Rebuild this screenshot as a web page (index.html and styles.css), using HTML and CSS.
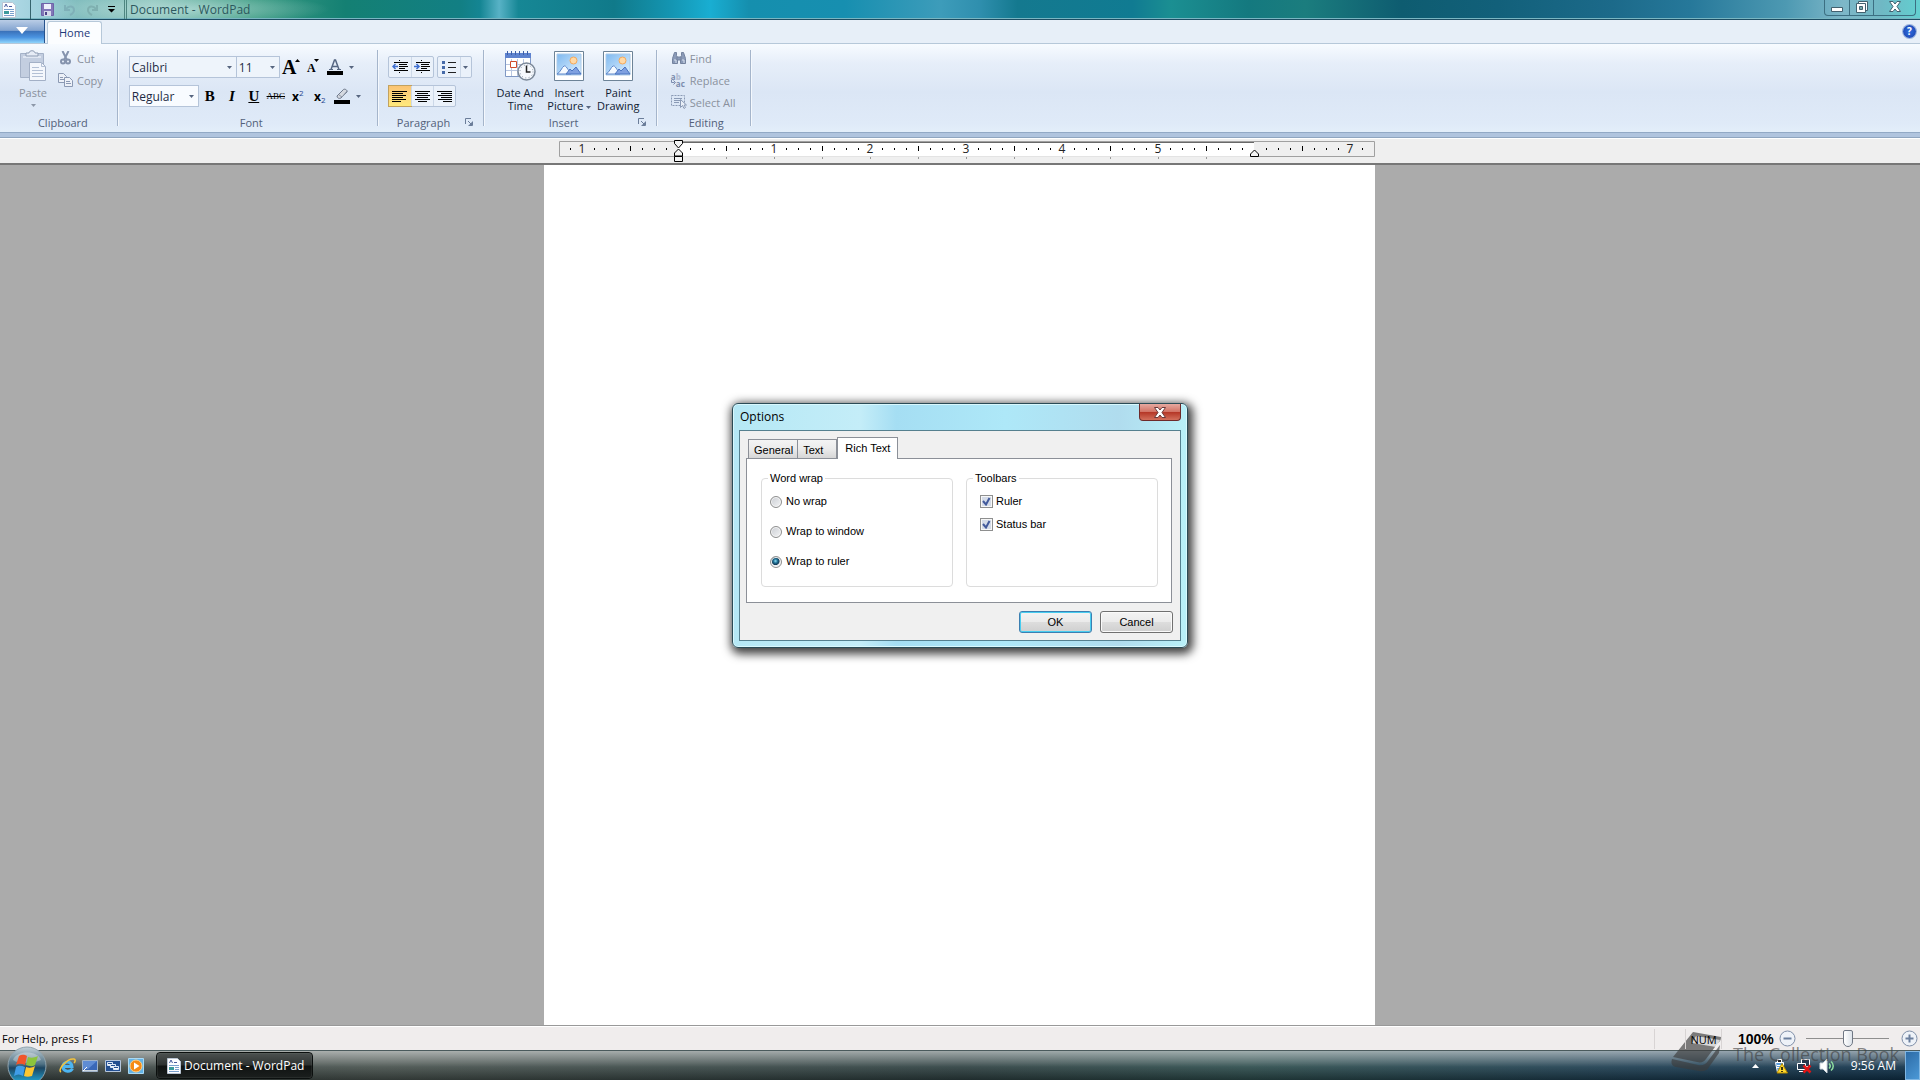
FILE: index.html
```html
<!DOCTYPE html>
<html lang="en">
<head>
    <meta charset="utf-8">
    <title>Document - WordPad</title>
    <link rel="stylesheet" href="styles.css">
</head>
<body>
    <!-- shared shapes -->
    <svg class="defs" width="0" height="0">
        <defs>
            <linearGradient id="sky" x1="0" y1="0" x2="1" y2="1">
                <stop offset="0" stop-color="#7fb9f0"/>
                <stop offset="1" stop-color="#e2f3ff"/>
            </linearGradient>
            <linearGradient id="orbFill" x1="0" y1="0" x2="0" y2="1">
                <stop offset="0" stop-color="#c3d2da"/>
                <stop offset=".45" stop-color="#4f7184"/>
                <stop offset=".55" stop-color="#1d4561"/>
                <stop offset="1" stop-color="#23b5e8"/>
            </linearGradient>
            <symbol id="doc" viewBox="0 0 14 16">
                <path d="M.5 .5h10l3 3v12H.5z" fill="#fdfdff" stroke="#b9c4d2"/>
                <path d="M2.500 5l1.500-3 1.500 3M7 4.500h3" stroke="#46599c" fill="none"/>
                <path d="M2 7.500h10M8 9.500h4M8 11.500h4M2 13.500h10" stroke="#7aa0cc"/>
                <path d="M2 9h5v3H2z" fill="#3c9a9b"/>
            </symbol>
            <symbol id="picture" viewBox="0 0 30 30">
                <path d="M.5 .5h29v29H.5z" fill="#fff" stroke="#6d8397"/>
                <path d="M3 3h24v21H3z" fill="url(#sky)" stroke="#a9c9e8"/>
                <circle cx="19.500" cy="9.500" r="3.500" fill="#ffd9a6" stroke="#f3a95c"/>
                <path d="M3 23c3-1 5-7 7-8s4 4 7 8z" fill="#f5faff" stroke="#5e87c9"/>
                <path d="M12 23l4-5 2 2 4-4 5 7z" fill="#7fa0e0" stroke="#4a74c0"/>
                <path d="M4 25.500h22" stroke="#fff"/>
            </symbol>
            <symbol id="arrow" viewBox="0 0 5 3">
                <path d="M0 0h5L2.500 3z"/>
            </symbol>
            <symbol id="launch" viewBox="0 0 8 8">
                <path d="M.5 6V.5H6M3 3l3 3M7.500 3.500v4h-4" fill="none" stroke="#6b7d99"/>
                <path d="M7 4v3H4z" fill="#6b7d99"/>
            </symbol>
        </defs>
    </svg>

    <header class="titlebar">
        <svg class="doc-icon" width="14" height="16"><use href="#doc"/></svg>
        <div class="quick-access">
            <button type="button" aria-label="Save">
                <svg width="13" height="13" viewBox="0 0 13 13">
                    <path d="M.5 .5h12v12H.5z" fill="#8277b8" stroke="#6f63a8"/>
                    <path d="M3 1h7v5H3z" fill="#eef0fb"/>
                    <path d="M3 8h7v5H3z" fill="#d5d9ea"/>
                    <path d="M4 9h2v3H4z" fill="#4e4389"/>
                </svg>
            </button>
            <button type="button" aria-label="Undo">
                <svg width="12" height="12" viewBox="0 0 12 12" fill="none" stroke="#7fb0b8" stroke-width="2">
                    <path d="M1 1v5h5M2 5c3-4 8-3 8 1 0 3-2 4-4 5"/>
                </svg>
            </button>
            <button type="button" aria-label="Redo">
                <svg width="12" height="12" viewBox="0 0 12 12" fill="none" stroke="#7fb0b0" stroke-width="2">
                    <path d="M11 1v5H6M10 5C7 1 2 2 2 6c0 3 2 4 4 5"/>
                </svg>
            </button>
            <button type="button" aria-label="Customize Quick Access Toolbar">
                <svg width="7" height="7" viewBox="0 0 7 7"><path d="M0 0h7v1H0zM0 3h7L3.500 6.500z"/></svg>
            </button>
        </div>
        <span class="window-title">Document - WordPad</span>
        <div class="window-buttons">
            <button type="button" aria-label="Minimize">
                <svg width="12" height="12" viewBox="0 0 12 12"><path d="M.5 6.500h11v4H.5z" fill="#fff" stroke="#43616f"/></svg>
            </button>
            <button type="button" aria-label="Restore">
                <svg width="12" height="12" viewBox="0 0 12 12">
                    <path d="M2.500 .5h9v9h-9z" fill="#fff" stroke="#43616f"/>
                    <path d="M.5 2.500h9v9h-9z" fill="#fff" stroke="#43616f"/>
                    <path d="M3.500 5.500h3v3h-3z" fill="#7aa" stroke="#43616f"/>
                </svg>
            </button>
            <button type="button" class="wide" aria-label="Close">
                <svg width="12" height="11" viewBox="0 0 12 11">
                    <path d="M.5 .5h3.500l2 2.500 2-2.500h3.500L8 5.500l3.500 5H8L6 8l-2 2.500H.500l3.500-5z" fill="#fff" stroke="#43616f"/>
                </svg>
            </button>
        </div>
    </header>

    <nav class="tabrow">
        <button type="button" class="app-button" aria-label="WordPad menu">
            <svg width="12" height="7" viewBox="0 0 12 7"><path d="M0 0h12L6 7z" fill="#fff"/></svg>
        </button>
        <button type="button" class="ribbon-tab">Home</button>
        <button type="button" class="help" aria-label="Help">?</button>
    </nav>

    <section class="ribbon">
        <div class="group clipboard">
            <div class="group-body">
                <button type="button" class="big dim">
                    <svg width="28" height="32" viewBox="0 0 28 32">
                        <path d="M1.500 3.500h23v24h-23z" fill="#c3cee0" stroke="#a5b2c8"/>
                        <path d="M4 6h18v2H4z" fill="#dfe6f2"/>
                        <path d="M7 6V3h3c0-3 6-3 6 0h3v3z" fill="#e6ecf6" stroke="#8f9db4"/>
                        <path d="M10.500 12.500h12l4 4v14h-16z" fill="#f4f7fc" stroke="#a3b0c6"/>
                        <path d="M22.500 12.500v4h4M13 17.500h7M13 20.500h11M13 23.500h11M13 26.500h11" fill="none" stroke="#b3c0d5"/>
                    </svg>
                    <span>Paste</span>
                    <svg class="arrow" width="5" height="3"><use href="#arrow"/></svg>
                </button>
                <div class="stack">
                    <button type="button" class="small dim">
                        <svg width="16" height="14" viewBox="0 0 16 14" fill="none" stroke="#8593ad">
                            <path d="M4.500 0l4.500 9M10.500 0l-4.500 9" stroke-width="2"/>
                            <circle cx="5" cy="10.500" r="2" stroke-width="2"/>
                            <circle cx="10" cy="10.500" r="2" stroke-width="2"/>
                        </svg>
                        Cut
                    </button>
                    <button type="button" class="small dim">
                        <svg width="16" height="14" viewBox="0 0 16 14" fill="#edf1f8" stroke="#8b99b3">
                            <path d="M.5 .5h5l3 3v6h-8zM2 4.500h3M2 6.500h4"/>
                            <path d="M6.500 4.500h5l3 3v6h-8zM8 8.500h4M8 10.500h5"/>
                        </svg>
                        Copy
                    </button>
                </div>
            </div>
            <div class="group-foot"><span>Clipboard</span></div>
        </div>

        <div class="group font">
            <div class="group-body rows">
                <div class="row">
                    <select class="combo family" aria-label="Font family"><option>Calibri</option></select>
                    <select class="combo size" aria-label="Font size"><option>11</option></select>
                    <button type="button" class="tool serif grow" aria-label="Grow font">A<svg width="5" height="3" viewBox="0 0 5 3"><path d="M0 3h5L2.500 0z"/></svg></button>
                    <button type="button" class="tool serif shrink" aria-label="Shrink font">A<svg width="5" height="3"><use href="#arrow"/></svg></button>
                    <button type="button" class="tool" aria-label="Text color">
                        <svg width="16" height="16" viewBox="0 0 16 16">
                            <path d="M4 10.500L7.500 1h1L12 10.500M5.500 7.500h5" fill="none" stroke="#566682" stroke-width="1.500"/>
                            <path d="M2 10.500h4M10 10.500h4" stroke="#566682"/>
                            <path d="M0 12h16v4H0z"/>
                        </svg>
                    </button>
                    <button type="button" class="drop" aria-label="More text colors"><svg width="5" height="3"><use href="#arrow"/></svg></button>
                </div>
                <div class="row">
                    <select class="combo style" aria-label="Font style"><option>Regular</option></select>
                    <button type="button" class="tool serif">B</button>
                    <button type="button" class="tool serif"><i>I</i></button>
                    <button type="button" class="tool serif"><u>U</u></button>
                    <button type="button" class="tool strike"><s>ABC</s></button>
                    <button type="button" class="tool script">x<sup>2</sup></button>
                    <button type="button" class="tool script">x<sub>2</sub></button>
                    <button type="button" class="tool" aria-label="Highlight color">
                        <svg width="16" height="16" viewBox="0 0 16 16">
                            <path d="M3 8l6-6c1-2 5 0 4 2L7 10c-2 1-4 0-4-2z" fill="#d5d9e0" stroke="#707a8c"/>
                            <path d="M5 7l3 2 5-6" fill="none" stroke="#8e98a8"/>
                            <path d="M0 12h16v4H0z"/>
                        </svg>
                    </button>
                    <button type="button" class="drop" aria-label="More highlight colors"><svg width="5" height="3"><use href="#arrow"/></svg></button>
                </div>
            </div>
            <div class="group-foot"><span>Font</span></div>
        </div>

        <div class="group paragraph">
            <div class="group-body rows">
                <div class="row spaced">
                    <div class="cluster">
                        <button type="button" class="tool" aria-label="Decrease indent">
                            <svg width="16" height="14" viewBox="0 0 16 14" fill="none" stroke="#000">
                                <path d="M7 .5h1M2 2.500h14M7 4.500h8M7 6.500h9M7 8.500h6M2 10.500h14M7 12.500h1"/>
                                <path d="M6 6.500H1M3.500 4L1 6.500 3.500 9" stroke="#3f6fd0" stroke-width="1.500"/>
                            </svg>
                        </button>
                        <button type="button" class="tool" aria-label="Increase indent">
                            <svg width="16" height="14" viewBox="0 0 16 14" fill="none" stroke="#000">
                                <path d="M7 .5h1M2 2.500h14M7 4.500h8M7 6.500h9M7 8.500h6M2 10.500h14M7 12.500h1"/>
                                <path d="M0 6.500h5M2.500 4L5 6.500 2.500 9" stroke="#3f6fd0" stroke-width="1.500"/>
                            </svg>
                        </button>
                    </div>
                    <div class="cluster">
                        <button type="button" class="tool" aria-label="Bullets">
                            <svg width="14" height="13" viewBox="0 0 14 13">
                                <path d="M6 1.500h8M6 6.500h8M6 11.500h8" stroke="#222"/>
                                <path d="M0 0h3v3H0zM0 5h3v3H0zM0 10h3v3H0z" fill="#466aa8"/>
                            </svg>
                        </button>
                        <button type="button" class="drop" aria-label="More bullets"><svg width="5" height="3"><use href="#arrow"/></svg></button>
                    </div>
                </div>
                <div class="row">
                    <div class="cluster">
                        <button type="button" class="tool active" aria-label="Align left">
                            <svg width="15" height="11" viewBox="0 0 15 11"><path d="M0 .5h15M0 2.500h11M0 4.500h14M0 6.500h11M0 8.500h14M0 10.500h9" stroke="#000"/></svg>
                        </button>
                        <button type="button" class="tool" aria-label="Center">
                            <svg width="15" height="11" viewBox="0 0 15 11"><path d="M0 .5h15M2 2.500h11M0 4.500h15M2 6.500h11M0 8.500h15M3 10.500h9" stroke="#000"/></svg>
                        </button>
                        <button type="button" class="tool" aria-label="Align right">
                            <svg width="15" height="11" viewBox="0 0 15 11"><path d="M0 .5h15M4 2.500h11M1 4.500h14M4 6.500h11M1 8.500h14M6 10.500h9" stroke="#000"/></svg>
                        </button>
                    </div>
                </div>
            </div>
            <div class="group-foot"><span>Paragraph</span><button type="button" class="launcher" aria-label="Paragraph settings"><svg width="8" height="8"><use href="#launch"/></svg></button></div>
        </div>

        <div class="group insert">
            <div class="group-body">
                <button type="button" class="big">
                    <svg width="32" height="30" viewBox="0 0 32 30">
                        <path d="M1.500 3.500h25v22h-25z" fill="#fff" stroke="#8098c4"/>
                        <path d="M1 2h26v5H1z" fill="#5d82cf"/>
                        <path d="M3.500 0v4M7.500 0v4M11.500 0v4M15.500 0v4M19.500 0v4M23.500 0v4" stroke="#3d5fa8"/>
                        <path d="M2 13.500h24M2 19.500h24M7.500 8v17M13.500 8v17M19.500 8v17" stroke="#b8c6e0"/>
                        <path d="M6.500 10.500h6v6h-6z" fill="#fff" stroke="#cf4b2c"/>
                        <circle cx="22.500" cy="20.500" r="8.500" fill="#f6f9fd" stroke="#7b8898" stroke-width="1.500"/>
                        <path d="M22.500 14.500v6.500h4" fill="none" stroke="#222" stroke-width="1.500"/>
                        <circle cx="22.500" cy="20.500" r="6.500" fill="none" stroke="#8794a6" stroke-dasharray="1 2.400"/>
                    </svg>
                    <span>Date And<br>Time</span>
                </button>
                <button type="button" class="big">
                    <svg width="30" height="30"><use href="#picture"/></svg>
                    <span>Insert<br>Picture <svg class="arrow" width="5" height="3"><use href="#arrow"/></svg></span>
                </button>
                <button type="button" class="big">
                    <svg width="30" height="30"><use href="#picture"/></svg>
                    <span>Paint<br>Drawing</span>
                </button>
            </div>
            <div class="group-foot"><span>Insert</span><button type="button" class="launcher" aria-label="Insert object"><svg width="8" height="8"><use href="#launch"/></svg></button></div>
        </div>

        <div class="group editing">
            <div class="group-body">
                <div class="stack">
                    <button type="button" class="small dim">
                        <svg width="16" height="14" viewBox="0 0 16 14" fill="#8a9ab8" stroke="#74839f">
                            <path d="M3.500 1.500h2v3l1 2v6h-5v-5zM10.500 1.500h2l2 6v5h-5v-6l1-2z"/>
                            <path d="M6 6h4v3H6z"/>
                            <path d="M3 9h2v3M11 9h2v3" fill="none" stroke="#d7e0ee"/>
                        </svg>
                        Find
                    </button>
                    <button type="button" class="small dim">
                        <span class="abac" aria-hidden="true">
                            <span>a<b>b</b></span>
                            <span><svg width="5" height="5" viewBox="0 0 5 5" fill="none" stroke="#7b8cae"><path d="M.5 0v2.500h3M2.500 .5l2 2-2 2"/></svg>ac</span>
                        </span>
                        Replace
                    </button>
                    <button type="button" class="small dim">
                        <svg width="16" height="14" viewBox="0 0 16 14" fill="none" stroke="#8a9ab5">
                            <path d="M.5 .5h13v10H.5z" stroke-dasharray="2 1"/>
                            <path d="M3 3.500h8M3 5.500h6M3 7.500h5"/>
                            <path d="M9.500 4.500v8l2-2 1.500 3 1.500-1-1.500-2.500h2.500z" fill="#e9eff8"/>
                        </svg>
                        Select All
                    </button>
                </div>
            </div>
            <div class="group-foot"><span>Editing</span></div>
        </div>
    </section>

    <div class="ruler-strip">
        <svg class="ruler" width="831" height="24" viewBox="0 0 831 24">
            <defs>
                <pattern id="ticks" x="134" y="0" width="96" height="24" patternUnits="userSpaceOnUse">
                    <path d="M12 9h1v2h-1zM24 9h1v2h-1zM36 9h1v2h-1zM48 7h1v5h-1zM60 9h1v2h-1zM72 9h1v2h-1zM84 9h1v2h-1z"/>
                </pattern>
                <pattern id="stops" x="134" y="0" width="48" height="24" patternUnits="userSpaceOnUse">
                    <path d="M0 18h1v2H0z" fill="#999"/>
                </pattern>
            </defs>
            <path d="M15.500 2.500h815v15h-815z" fill="#efefef" stroke="#a0a0a0"/>
            <path d="M134 2h576v16H134z" fill="#fff"/>
            <path d="M134 2h576v1H134z" fill="#a0a0a0"/>
            <path d="M134 3h576v1H134z" fill="#696969"/>
            <path d="M134 17h576v1H134z" fill="#e3e3e3"/>
            <path d="M16 4h814v12H16z" fill="url(#ticks)"/>
            <path d="M180 18h524v2H180z" fill="url(#stops)"/>
            <text x="38" y="14">1</text>
            <text x="230" y="14">1</text>
            <text x="326" y="14">2</text>
            <text x="422" y="14">3</text>
            <text x="518" y="14">4</text>
            <text x="614" y="14">5</text>
            <text x="806" y="14">7</text>
            <path d="M130.500 1.500h8v3l-4 4.500-4-4.500zM134.500 10l4 4v3h-8v-3zM130.500 17.500h8v5h-8z" fill="#f4f4f4" stroke="#000"/>
            <path d="M710.500 11l4 4v2.500h-8v-2.500z" fill="#f4f4f4" stroke="#000"/>
        </svg>
    </div>

    <main class="workspace">
        <div class="page" contenteditable="true" role="textbox" aria-label="Document"></div>
    </main>

    <footer class="statusbar">
        <span class="hint">For Help, press F1</span>
        <span class="cell"></span>
        <span class="cell num">NUM</span>
        <span class="percent">100%</span>
        <button type="button" class="zoom-button" aria-label="Zoom out">
            <svg width="17" height="17" viewBox="0 0 17 17"><circle cx="8.500" cy="8.500" r="7.500" fill="#eef2f8" stroke="#7f8fa8"/><path d="M4.500 8.500h8" stroke="#6b7f9e" stroke-width="2"/></svg>
        </button>
        <input type="range" class="zoom" min="0" max="100" value="51" aria-label="Zoom">
        <button type="button" class="zoom-button" aria-label="Zoom in">
            <svg width="17" height="17" viewBox="0 0 17 17"><circle cx="8.500" cy="8.500" r="7.500" fill="#eef2f8" stroke="#7f8fa8"/><path d="M4.500 8.500h8M8.500 4.500v8" stroke="#6b7f9e" stroke-width="2"/></svg>
        </button>
    </footer>

    <div class="taskbar">
        <button type="button" class="start" aria-label="Start">
            <svg width="40" height="40" viewBox="0 0 40 40">
                <circle cx="20" cy="20" r="19" fill="url(#orbFill)" stroke="#8fa3ae"/>
                <path d="M6 14C9 4 31 4 34 14c-7 3-21 5-28 0z" fill="#fff" opacity=".3"/>
                <path d="M12 10c3-2 6-1 8 0l-2 9c-3-1-6-2-9 0z" fill="#f0562b"/>
                <path d="M21 11c3 1 6 1 10-1l-3 9c-3 2-6 1-9 0z" fill="#8cc43c"/>
                <path d="M9 21c3-2 6-1 9 0l-2 9c-3-2-6-2-9 0z" fill="#3f9de8"/>
                <path d="M19 21c3 1 6 1 9-1l-3 10c-3 1-6 1-8 0z" fill="#fdc62f"/>
            </svg>
        </button>
        <div class="quick-launch">
            <button type="button" aria-label="Internet Explorer">
                <svg width="17" height="16" viewBox="0 0 17 16" fill="none">
                    <path d="M13.500 10.500C12 14 5 14.500 4 9.500 3 3 12.500 2 13 8.500H5" stroke="#4cb5f2" stroke-width="3"/>
                    <path d="M2 14C-2 12 8 0 15 1c2 .5 1 3 0 4" stroke="#f3c33c" stroke-width="1.500"/>
                </svg>
            </button>
            <button type="button" aria-label="Show Desktop">
                <svg width="17" height="16" viewBox="0 0 17 16">
                    <path d="M.5 2.500h15v11H.5z" fill="#3a68b8" stroke="#9fb2c8"/>
                    <path d="M1 3h14L6 11H1z" fill="#5f8cd4"/>
                    <path d="M1 12h14v1H1z" fill="#c9d4de"/>
                    <path d="M1 13l4-4" stroke="#fff"/>
                </svg>
            </button>
            <button type="button" aria-label="Switch between windows">
                <svg width="17" height="16" viewBox="0 0 17 16">
                    <path d="M.5 2.500h15v11H.5z" fill="#234f91" stroke="#b5c6dc"/>
                    <path d="M2.500 4.500h5v3h-5zM5.500 6.500h5v3h-5zM8.500 8.500h5v3h-5z" fill="#f1f6ff" stroke="#dbe6f5"/>
                    <path d="M3 5.500h4M6 7.500h4M9 9.500h4" stroke="#234f91"/>
                </svg>
            </button>
            <button type="button" aria-label="Windows Media Player">
                <svg width="17" height="16" viewBox="0 0 17 16">
                    <path d="M.5 .5h15v15H.5z" fill="#64b3e6" stroke="#a8d9f5"/>
                    <circle cx="8" cy="8" r="6" fill="#f58b16" stroke="#ffd28a"/>
                    <path d="M6 4.500L11.500 8 6 11.500z" fill="#fff"/>
                </svg>
            </button>
        </div>
        <button type="button" class="task">
            <svg width="14" height="16"><use href="#doc"/></svg>
            Document - WordPad
        </button>
        <div class="tray">
            <svg width="7" height="4" viewBox="0 0 7 4"><path d="M0 4h7L3.500 0z" fill="#fff"/></svg>
            <div class="tray-icons">
                <svg width="16" height="16" viewBox="0 0 16 16">
                    <path d="M4.500 1.500h4v3h-4z" fill="#222" stroke="#fff"/>
                    <path d="M2.500 4.500h8v10h-6z" fill="#5c9ddb" stroke="#fff"/>
                    <path d="M4 7.500h5M4 9.500h4" stroke="#fff"/>
                    <path d="M9 5.500L14.500 15H4z" fill="#ffd92e" stroke="#b58b00"/>
                    <path d="M9 9v3M9 13v1" stroke="#000" stroke-width="1.500"/>
                </svg>
                <svg width="16" height="16" viewBox="0 0 16 16">
                    <path d="M5.500 1.500h8v7h-8z" fill="#24384e" stroke="#fff"/>
                    <path d="M1.500 5.500h8v6h-8zM3 13.500h5" fill="#24384e" stroke="#fff"/>
                    <path d="M7.500 7.500l7 7M14.500 7.500l-7 7" stroke="#e01414" stroke-width="2.500"/>
                </svg>
                <svg width="16" height="16" viewBox="0 0 16 16">
                    <path d="M1 5h3l4-4v14l-4-4H1z" fill="#fff" stroke="#cdd6dd"/>
                    <path d="M10 5.500c1.500 1.500 1.500 3.500 0 5M12 3.500c3 2.500 3 6.500 0 9" fill="none" stroke="#8fe0a0" stroke-width="1.500"/>
                </svg>
            </div>
            <span class="clock">9:56 AM</span>
        </div>
        <button type="button" class="show-desktop" aria-label="Show desktop"></button>
    </div>

    <div class="watermark">
        <svg width="50" height="42" viewBox="0 0 50 42">
            <path d="M22 1l28 5c0 3-1 4-3 6L35 28c-2 3-5 4-9 3L2 26z"/>
            <path d="M1 28l26 6c5 1 8-1 10-4l12-16-1 8-10 14c-2 4-6 5-10 4L5 36c-5-1-5-5-4-8z"/>
            <path d="M25 5l24 4-4 7-24-4z" fill="#fff" opacity=".7"/>
        </svg>
        <span>The Collection Book</span>
    </div>

    <div class="dialog" role="dialog" aria-labelledby="dialog-title">
        <div class="dialog-title">
            <span id="dialog-title">Options</span>
            <button type="button" class="dialog-close" aria-label="Close">
                <svg width="12" height="11" viewBox="0 0 12 11">
                    <path d="M.5 .5h3.500l2 2.500 2-2.500h3.500L8 5.500l3.500 5H8L6 8l-2 2.500H.500l3.500-5z" fill="#fff" stroke="#6b3a3a"/>
                </svg>
            </button>
        </div>
        <form class="dialog-body">
            <div class="dialog-tabs" role="tablist">
                <button type="button" role="tab">General</button>
                <button type="button" role="tab" class="text-tab">Text</button>
                <button type="button" role="tab" class="selected" aria-selected="true">Rich Text</button>
            </div>
            <div class="dialog-panel">
                <fieldset class="wrap-options">
                    <legend>Word wrap</legend>
                    <label><input type="radio" name="wrap">No wrap</label>
                    <label><input type="radio" name="wrap">Wrap to window</label>
                    <label><input type="radio" name="wrap" checked>Wrap to ruler</label>
                </fieldset>
                <fieldset class="toolbar-options">
                    <legend>Toolbars</legend>
                    <label><input type="checkbox" checked>Ruler</label>
                    <label><input type="checkbox" checked>Status bar</label>
                </fieldset>
            </div>
            <div class="dialog-actions">
                <button type="button" class="default">OK</button>
                <button type="button">Cancel</button>
            </div>
        </form>
    </div>
</body>
</html>
```
FILE: styles.css
```css
* {
    box-sizing: border-box;
}

body {
    margin: 0;
    height: 100vh;
    display: flex;
    flex-direction: column;
    overflow: hidden;
    font-family: "Open Sans", "Noto Sans", sans-serif;
    font-size: 11px;
    color: #1e2b45;
    background-color: #ababab;
}

button {
    font: inherit;
    color: inherit;
    background: none;
    border: none;
    padding: 0;
    margin: 0;
}

svg {
    display: block;
    flex: none;
}

.defs {
    position: absolute;
}

/* Title bar */

.titlebar {
    flex: none;
    height: 20px;
    display: flex;
    align-items: flex-start;
    border-bottom: 1px solid #1d4e63;
    box-shadow: inset 0 -1px #79b6c2;
    background:
        radial-gradient(ellipse 150px 16px at 180px 9px, rgba(190, 225, 222, 0.7), transparent),
        linear-gradient(90deg, #b5dbe8 0, #9fd0dc 2%, #7cbabb 4%, #8cc4bb 8%, #3c9c82 13%, #148073 18%, #127f84 24%, #148593 25%, #58b2c6 26%, #168795 27%, #107a8a 32%, #1496b3 35%, #19aed2 37%, #158fae 39%, #178fb0 44%, #3d9cba 49%, #2f8fae 51%, #14798f 53%, #107b92 59%, #1b8f92 61%, #14797f 65%, #1b7d7e 68%, #0e5c70 73%, #12607a 78%, #1c6a8a 84%, #26789a 88%, #4d99b2 93%, #7db7c8 96%, #6fb8c4 98%, #62cfd0 100%);
}

.doc-icon {
    margin: 2px 0 0 2px;
}

.quick-access {
    height: 19px;
    margin-left: 14px;
    padding: 0 9px 0 10px;
    display: flex;
    align-items: center;
    gap: 10px;
    border-left: 1px solid #35636c;
    border-right: 3px double #4d8580;
}

.window-title {
    margin-left: 3px;
    font-size: 12px;
    line-height: 19px;
    color: #2c585e;
}

.window-buttons {
    margin: 0 4px 0 auto;
    display: flex;
    height: 16px;
    border: 1px solid #3c6f82;
    border-top: none;
    border-radius: 0 0 4px 4px;
}

.window-buttons button {
    width: 24px;
    display: flex;
    justify-content: center;
    padding-top: 1px;
}

.window-buttons button + button {
    border-left: 1px solid #3c6f82;
}

.window-buttons .wide {
    width: 42px;
}

/* Tab row */

.tabrow {
    flex: none;
    height: 24px;
    display: flex;
    align-items: stretch;
    background-color: #e7eff8;
    border-bottom: 1px solid #b6c8d9;
}

.app-button {
    width: 45px;
    display: flex;
    justify-content: center;
    padding-top: 7px;
    border-right: 1px solid #27538d;
    background: linear-gradient(#bacde6, #83a4d0 45%, #3b73bb 50%, #4a93e0 75%, #8fd4fb);
}

.ribbon-tab {
    height: 23px;
    margin: 1px 0 0 2px;
    padding: 0 11px 2px;
    color: #1e3a7a;
    background-color: #fbfdff;
    border: 1px solid #b6c8d9;
    border-bottom: none;
    border-radius: 3px 3px 0 0;
    box-shadow: 0 1px #fbfdff;
}

.help {
    width: 13px;
    height: 13px;
    margin: 5px 4px 0 auto;
    border-radius: 50%;
    background: radial-gradient(#2f6de0, #1a3fa8);
    box-shadow: 0 0 0 1px #9cb4dc;
    color: #fff;
    font-weight: bold;
    font-size: 10px;
    line-height: 13px;
}

/* Ribbon */

.ribbon {
    flex: none;
    display: flex;
    padding: 6px 0;
    border-bottom: 1px solid #92a9c5;
    background: linear-gradient(#f7fbff, #e6eef9 22%, #dbe6f5 55%, #dfeaf8 90%, #e3eefa);
}

.group {
    height: 76px;
    display: flex;
    flex-direction: column;
    border-right: 1px solid #a5b5cb;
    box-shadow: 1px 0 #f4f8fd;
}

.group-body {
    flex: 1;
    display: flex;
    align-items: flex-start;
}

.group-foot {
    display: flex;
    align-items: center;
    justify-content: center;
    height: 14px;
    margin-bottom: -3px;
    color: #53617a;
}

.launcher {
    margin-right: 10px;
}

.clipboard { padding: 0 14px 0 15px; }
.clipboard .group-foot { padding-left: 8px; }
.clipboard .stack { margin-left: 7px; }
.font { padding: 0 13px 0 11px; }
.font .group-foot { padding-left: 10px; }
.paragraph { padding-left: 10px; width: 106px; }
.insert { padding-left: 12px; width: 173px; }
.paragraph .group-foot,
.insert .group-foot { justify-content: space-between; }
.paragraph .group-foot { padding-left: 9px; }
.insert .group-foot { padding-left: 53px; }
.editing { padding: 0 14px; }
.editing .group-foot { padding-left: 6px; }

.big {
    min-width: 36px;
    display: flex;
    flex-direction: column;
    align-items: center;
    white-space: nowrap;
    line-height: 13px;
}

.big > svg:first-child {
    margin: 1px 0 5px;
}

.clipboard .big > svg:first-child {
    margin: 0 0 4px;
}

.insert .big {
    min-width: 49px;
    color: #111c33;
}

.big span .arrow {
    display: inline-block;
    vertical-align: middle;
}

.arrow,
.drop svg {
    fill: #56657f;
}

.clipboard .arrow {
    margin-top: 5px;
    fill: #8c97a8;
}

.dim {
    color: #8a919d;
}

.small {
    height: 22px;
    display: flex;
    align-items: center;
    gap: 3px;
    white-space: nowrap;
}

.stack {
    display: flex;
    flex-direction: column;
    align-items: flex-start;
    margin-top: -3px;
}

.abac {
    width: 16px;
    text-align: left;
    font-size: 8px;
    line-height: 7px;
    font-weight: bold;
    color: #7b8cae;
}

.abac span {
    display: flex;
}

.abac b {
    color: #b3bfd4;
}

.rows {
    flex-direction: column;
    gap: 7px;
    padding-top: 6px;
}

.row {
    display: flex;
    height: 22px;
}

.spaced {
    gap: 3px;
}

.combo {
    appearance: none;
    height: 22px;
    padding: 0 2px;
    font: inherit;
    font-size: 12px;
    color: #1e2b45;
    border: 1px solid #b5c4d9;
    border-radius: 0;
    background: #eef4fb url("data:image/svg+xml,%3Csvg xmlns='http://www.w3.org/2000/svg' width='5' height='3'%3E%3Cpath d='M0 0h5L2.500 3z' fill='%2356657f'/%3E%3C/svg%3E") no-repeat right 4px center;
}

.family { width: 108px; }
.size { width: 44px; margin-left: -1px; }
.style { width: 70px; background-color: #f8fbff; }

.tool {
    width: 22px;
    display: flex;
    align-items: center;
    justify-content: center;
    color: #000;
}

.drop {
    width: 11px;
    display: flex;
    align-items: center;
    justify-content: center;
}

.serif {
    font-family: "Liberation Serif", serif;
    font-size: 15px;
    font-weight: bold;
}

.grow,
.shrink {
    align-items: flex-start;
}

.grow {
    font-size: 20px;
    line-height: 22px;
}

.shrink {
    font-size: 12px;
    line-height: 24px;
}

.grow svg,
.shrink svg {
    margin: 3px 0 0 -2px;
}

.strike {
    font-family: "Liberation Serif", serif;
    font-size: 9px;
}

.script {
    font-family: "Open Sans", sans-serif;
    font-weight: bold;
    font-size: 12px;
}

.script sup,
.script sub {
    font-size: 8px;
    line-height: 8px;
    font-weight: normal;
    color: #1f3f8f;
}

.script sup { align-self: flex-start; margin-top: 4px; }
.script sub { align-self: flex-end; margin-bottom: 3px; }

.cluster {
    display: flex;
    border: 1px solid #b5c4d9;
    border-radius: 2px;
    background-color: #eaf1fa;
}

.cluster .tool + button {
    border-left: 1px solid #ccd8e8;
}

.cluster .active {
    background: linear-gradient(#fbc372, #fdd77c 50%, #ffe97a);
    box-shadow: 0 0 0 1px #c2a25f;
}

/* Ruler */

.ruler-strip {
    flex: none;
    display: flex;
    justify-content: center;
    height: 32px;
    padding: 5px 1px 0 0;
    background-color: #efefef;
    border-top: 4px solid #b0c4de;
    border-bottom: 2px solid #777777;
    box-shadow: inset 0 1px #8fa5bf, inset 0 2px #ffffff;
}

.ruler {
    margin-top: -3px;
    overflow: visible;
}

.ruler text {
    font-size: 12px;
    text-anchor: middle;
    fill: #222222;
}

/* Document area */

.workspace {
    flex: 1;
    min-height: 0;
    display: flex;
    justify-content: center;
    padding-right: 1px;
    border-bottom: 1px solid #999999;
}

.page {
    width: 831px;
    background-color: #ffffff;
    outline: none;
}

/* Status bar */

.statusbar {
    flex: none;
    height: 24px;
    display: flex;
    align-items: center;
    padding: 0 2px;
    color: #000000;
    background-color: #f0eded;
    border-top: 1px solid #ffffff;
}

.hint {
    margin-right: auto;
}

.cell {
    width: 31px;
    height: 20px;
    border-left: 1px solid #d8d4d4;
}

.num {
    position: relative;
    z-index: 3;
    width: 37px;
    line-height: 22px;
    text-align: center;
    border-right: 1px solid #d8d4d4;
}

.percent {
    width: 41px;
    margin-left: 16px;
    font-family: "Liberation Sans", sans-serif;
    font-weight: bold;
    font-size: 14px;
}

.zoom {
    appearance: none;
    width: 83px;
    height: 19px;
    margin: 0 12px 0 10px;
    background: linear-gradient(#8e8e8e, #8e8e8e) center / 100% 1px no-repeat;
}

.zoom::-webkit-slider-thumb {
    appearance: none;
    width: 10px;
    height: 17px;
    border: 1px solid #6f7784;
    border-radius: 2px 2px 5px 5px;
    background: linear-gradient(90deg, #ffffff, #dde3ea);
}

/* Taskbar */

.taskbar {
    flex: none;
    height: 30px;
    display: flex;
    align-items: center;
    color: #ffffff;
    font-size: 12px;
    border-top: 1px solid #4a5a5c;
    background:
        linear-gradient(rgba(255, 255, 255, 0.55), rgba(255, 255, 255, 0.22) 40%, rgba(255, 255, 255, 0.08) 55%, rgba(0, 0, 0, 0.3)),
        linear-gradient(90deg, #3a4442, #46504c 20%, #2d3f40 50%, #2c4b4b 65%, #1c3c50 85%, #0f3048);
}

.start {
    width: 40px;
    margin: 0 12px 0 7px;
    z-index: 1;
}

.quick-launch {
    display: flex;
    gap: 6px;
}

.task {
    height: 27px;
    display: flex;
    align-items: center;
    gap: 3px;
    margin-left: 11px;
    padding: 0 8px 0 10px;
    border: 1px solid #0b0f0e;
    border-radius: 4px;
    background: linear-gradient(#4c5150, #2e3231 48%, #101312 52%, #1b1f1e);
    box-shadow: inset 0 0 1px #a0a8a6;
}

.tray {
    margin-left: auto;
    display: flex;
    align-items: center;
}

.tray-icons {
    display: flex;
    gap: 7px;
    margin: 0 16px 0 14px;
}

.show-desktop {
    align-self: stretch;
    width: 15px;
    margin-left: 9px;
    border: 1px solid #7fb6e3;
    background: linear-gradient(135deg, #2c6ba6, #4b98d6);
}

/* Stamp that lies over the status bar and the taskbar */

.watermark {
    position: absolute;
    right: 21px;
    bottom: 7px;
    display: flex;
    gap: 12px;
    font-size: 18px;
    line-height: 24px;
    color: rgba(60, 60, 60, 0.6);
    fill: rgba(60, 60, 60, 0.65);
    pointer-events: none;
    z-index: 2;
}

.watermark span {
    margin-top: 11px;
}

/* Options dialog */

.dialog {
    position: absolute;
    top: 403px;
    left: calc(50% - 228px);
    width: 456px;
    padding: 0 6px 6px;
    border: 1px solid #2b4b56;
    border-radius: 6px;
    background:
        linear-gradient(90deg, #b5e8f5 0, #c4edf8 28%, #a5def3 36%, #aee8f8 60%, #b0dcee 85%, #b9f0f8);
    box-shadow: inset 0 0 0 1px #d9f8fd, 2px 3px 10px 3px rgba(0, 0, 0, 0.75);
    font-family: "Liberation Sans", sans-serif;
    color: #000000;
}

.dialog-title {
    display: flex;
    align-items: flex-start;
    height: 26px;
    font-family: "Open Sans", sans-serif;
    font-size: 12px;
    line-height: 26px;
    padding-left: 1px;
}

.dialog-close {
    width: 42px;
    height: 17px;
    margin-left: auto;
    display: flex;
    align-items: center;
    justify-content: center;
    border: 1px solid #6e2a2a;
    border-top: none;
    border-radius: 0 0 4px 4px;
    background: linear-gradient(#e6a9a0, #d27466 48%, #b53727 52%, #d3705c);
}

.dialog-body {
    padding: 6px 8px 7px 6px;
    background-color: #f0f0f0;
    border: 1px solid #55808f;
}

.dialog-tabs {
    display: flex;
    align-items: flex-end;
    padding-left: 2px;
}

.dialog-tabs button {
    height: 19px;
    padding: 1px 4px 0 5px;
    border: 1px solid #8c9098;
    border-bottom: none;
    background: linear-gradient(#f4f4f4, #ebebeb 50%, #d6d6d6);
}

.dialog-tabs .text-tab {
    padding-right: 13px;
}

.dialog-tabs button + button {
    border-left: none;
}

.dialog-tabs .selected {
    height: 22px;
    margin-bottom: -1px;
    padding: 0 7px 2px;
    background: #ffffff;
    z-index: 1;
}

.dialog-tabs button + .selected {
    border-left: 1px solid #8c9098;
}

.dialog-panel {
    display: grid;
    grid-template-columns: 1fr 1fr;
    gap: 13px;
    padding: 13px 13px 15px 14px;
    background-color: #ffffff;
    border: 1px solid #8c9098;
}

fieldset {
    min-width: 0;
    height: 115px;
    margin: 0;
    padding: 0 8px;
    border: 1px solid #dcdcdc;
    border-radius: 4px;
}

legend {
    margin-left: -2px;
    padding: 0 2px;
    line-height: 13px;
}

fieldset label {
    display: flex;
    align-items: center;
    gap: 4px;
    line-height: 13px;
}

.wrap-options label {
    height: 13px;
    margin-top: 10px;
    margin-bottom: 17px;
}

.wrap-options label + label {
    margin-top: 0;
}

.toolbar-options {
    padding-left: 13px;
}

.toolbar-options legend {
    margin-left: -7px;
}

.toolbar-options label {
    gap: 3px;
    margin: 10px 0;
}

.toolbar-options label + label {
    margin-top: 0;
}

input[type="radio"],
input[type="checkbox"] {
    appearance: none;
    width: 13px;
    height: 13px;
    margin: 0;
    border: 1px solid #8e8f8f;
    box-shadow: inset 0 0 0 1px #f7f7f7;
    background: linear-gradient(135deg, #c9ccd2, #f4f5f6);
}

input[type="radio"] {
    width: 12px;
    height: 12px;
    border-radius: 50%;
}

input[type="radio"]:checked {
    background: radial-gradient(circle at 45% 40%, #8fe0f5 0, #1f6f94 25%, #123c58 45%, #e6eaee 55%);
}

input[type="checkbox"]:checked {
    background: #d4dbe8 url("data:image/svg+xml,%3Csvg xmlns='http://www.w3.org/2000/svg' width='9' height='9'%3E%3Cpath d='M1 4l3 3.500L7.500 1' fill='none' stroke='%23425a9c' stroke-width='2'/%3E%3C/svg%3E") no-repeat center;
}

.dialog-actions {
    display: flex;
    justify-content: flex-end;
    gap: 8px;
    margin: 8px -1px 0 0;
}

.dialog-actions button {
    width: 73px;
    height: 22px;
    border: 1px solid #707070;
    border-radius: 3px;
    background: linear-gradient(#f3f3f3, #ebebeb 48%, #dddddd 52%, #cfcfcf);
    box-shadow: inset 0 0 0 1px #fafafa;
}

.dialog-actions .default {
    border-color: #3c7fb1;
    box-shadow: inset 0 0 0 1px #48cdf0;
}
```
